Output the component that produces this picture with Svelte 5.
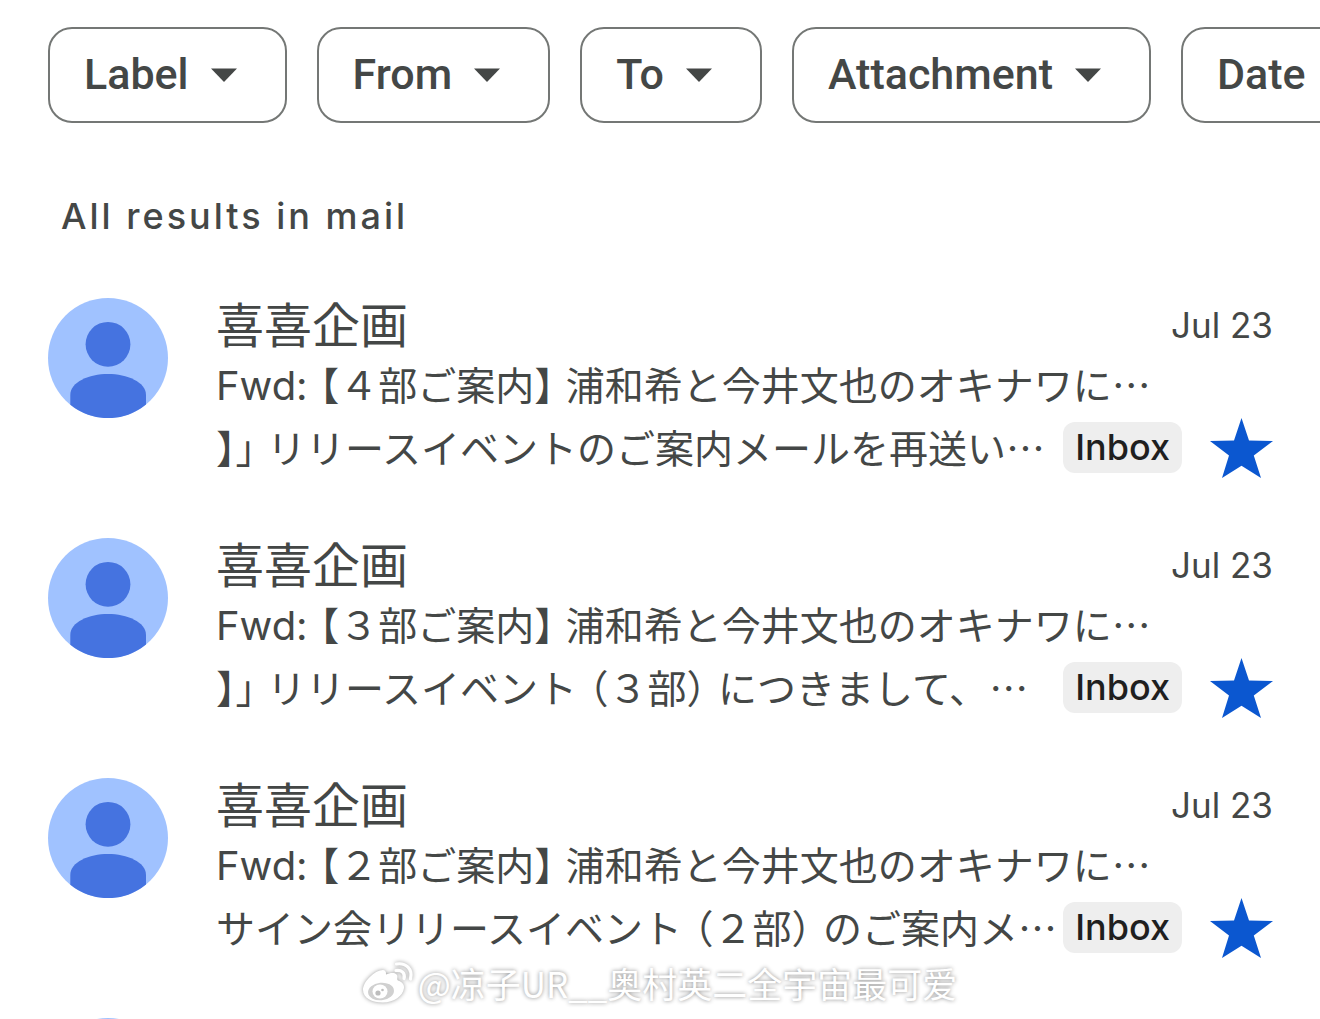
<script>
  const filters = ['Label', 'From', 'To', 'Attachment', 'Date'];

  const mails = [
    {
      sender: '喜喜企画',
      date: 'Jul 23',
      subject: 'Fwd:【４部ご案内】浦和希と今井文也のオキナワに…',
      snippet: '】」リリースイベントのご案内メールを再送い…',
      starred: true
    },
    {
      sender: '喜喜企画',
      date: 'Jul 23',
      subject: 'Fwd:【３部ご案内】浦和希と今井文也のオキナワに…',
      snippet: '】」リリースイベント（３部）につきまして、 …',
      starred: true
    },
    {
      sender: '喜喜企画',
      date: 'Jul 23',
      subject: 'Fwd:【２部ご案内】浦和希と今井文也のオキナワに…',
      snippet: 'サイン会リリースイベント（２部）のご案内メ…',
      starred: true
    }
  ];

  // Split before opening and after closing brackets, where the half-width
  // punctuation needs some air.
  const runs = (text) => text.split(/(?=[【（])|(?<=[】」）、])(?![】」）])/);
</script>

{#snippet avatar()}
  <svg class="avatar" viewBox="0 0 120 120" aria-hidden="true">
    <circle cx="60" cy="60" r="60" fill="#a0c2ff" />
    <circle cx="60" cy="46.3" r="22.4" fill="#4573e0" />
    <path d="M22.3 106.8V97C22.3 84 41 76 60 76S98 84 98 97v9.6A60 60 0 0 1 22.3 106.8Z" fill="#4573e0" />
  </svg>
{/snippet}

{#snippet spaced(text)}
  {#each runs(text) as run}<span class="run" class:latin={/^[A-Z]/.test(run)}>{run}</span>{/each}
{/snippet}

<main>
  <nav class="filters" aria-label="Search filters">
    {#each filters as filter}
      <button type="button" class="chip" aria-haspopup="listbox">
        {filter}
        <svg class="caret" viewBox="0 0 26 16" aria-hidden="true"><path d="M0 2.500h26L13 16Z" fill="currentColor" /></svg>
      </button>
    {/each}
  </nav>

  <h2>All results in mail</h2>

  <ul class="mails">
    {#each mails as mail}
      <li class="mail">
        {@render avatar()}
        <div class="body">
          <div class="line head">
            <span class="sender">{mail.sender}</span>
            <time>{mail.date}</time>
          </div>
          <div class="line"><span class="text">{@render spaced(mail.subject)}</span></div>
          <div class="line">
            <span class="text">{@render spaced(mail.snippet)}</span>
            <span class="tag">Inbox</span>
            <button type="button" class="star" aria-label="Starred" aria-pressed={mail.starred}>
              <svg viewBox="0 0 63 60" aria-hidden="true">
                <path d="M31.5 0 39 22.5 63 23 43.8 37.5 51 60 31.5 47.8 12 60 19 37.5 0 23 24 22.5Z" fill="#0b57d0" />
              </svg>
            </button>
          </div>
        </div>
      </li>
    {/each}
    <li class="mail">{@render avatar()}</li>
  </ul>

  <div class="watermark">
    <svg viewBox="0 0 52 44" aria-hidden="true">
      <path
        d="M17 9.500c4-1.500 6.500 0 6 4 4-2 9.500-2.500 11 .5 1 2-.5 4.500 1 5.500 4 1.500 6.500 4 6 7.500-1 8-10 14.500-21 14.500C9 41.500 0 37 0 29 0 21 10 11.500 17 9.500Z"
        fill="#fff"
      />
      <ellipse cx="18" cy="30.500" rx="13" ry="8.800" fill="#d0d0d0" transform="rotate(-6 18 30.500)" />
      <ellipse cx="17" cy="30.500" rx="7.500" ry="7" fill="#fff" />
      <circle cx="15" cy="32" r="2.600" fill="#bdbdbd" />
      <circle cx="19.500" cy="29" r="1.300" fill="#bdbdbd" />
      <path d="M33.500 3C43 1.500 50 8 47.500 18M33 9.500c5.500-.8 9.500 2.500 8 8" fill="none" stroke="#fff" stroke-width="3.200" stroke-linecap="round" />
    </svg>
    <span>@凉子UR__奥村英二全宇宙最可爱</span>
  </div>
</main>

<style>
  :global(body) {
    margin: 0;
    background: #fff;
  }

  main {
    position: relative;
    box-sizing: border-box;
    height: 100vh;
    overflow: hidden;
    padding-top: 27px;
    color: #444746;
    font-family: Inter, 'Noto Sans CJK JP', sans-serif;
  }

  button {
    color: inherit;
    font: inherit;
    cursor: pointer;
  }

  .filters {
    display: flex;
    gap: 30px;
    padding-left: 48px;
    overflow: hidden;
  }

  .chip {
    display: flex;
    flex: none;
    align-items: center;
    gap: 22px;
    box-sizing: border-box;
    height: 96px;
    padding: 0 48px 2px 34px;
    border: 2px solid #747775;
    border-radius: 24px;
    background: #fff;
    font-family: Roboto, sans-serif;
    font-size: 43px;
    font-weight: 500;
  }

  .caret {
    width: 26px;
    height: 16px;
  }

  h2 {
    margin: 68px 0 0;
    padding-left: 61px;
    font-size: 36px;
    font-weight: 500;
    line-height: 50px;
    letter-spacing: 3px;
  }

  .mails {
    display: flex;
    flex-direction: column;
    gap: 60px;
    margin: 0;
    padding: 57px 47px 0 48px;
    list-style: none;
  }

  .mail {
    display: flex;
    gap: 48px;
    height: 180px;
  }

  .avatar {
    flex: none;
    width: 120px;
    height: 120px;
  }

  .body {
    flex: 1;
    min-width: 0;
  }

  .line {
    display: flex;
    align-items: center;
    height: 61px;
    white-space: nowrap;
  }

  .head {
    justify-content: space-between;
    height: 58px;
  }

  .sender {
    padding-bottom: 10px;
    font-family: 'Noto Sans CJK JP', sans-serif;
    font-size: 48px;
    line-height: 56px;
  }

  time {
    padding-bottom: 4px;
    font-size: 35px;
  }

  .text {
    display: flex;
    flex: 1;
    align-items: baseline;
    gap: 12px;
    min-width: 0;
    padding-bottom: 4px;
    overflow: hidden;
    font-family: 'Noto Sans CJK JP', sans-serif;
    font-size: 39px;
    font-feature-settings: 'halt';
    line-height: 58px;
  }

  .run {
    white-space: pre;
  }

  .latin {
    font-family: Inter, sans-serif;
    font-size: 40px;
  }

  .tag {
    margin-right: 28px;
    padding: 0 12px;
    border-radius: 12px;
    background: #eee;
    color: #1f1f1f;
    font-size: 36px;
    font-weight: 500;
    line-height: 51px;
  }

  .star {
    flex: none;
    padding: 0;
    border: 0;
    background: none;
  }

  .star svg {
    display: block;
    width: 63px;
    height: 60px;
  }

  .watermark {
    position: absolute;
    right: 0;
    bottom: 11px;
    left: 0;
    display: flex;
    align-items: center;
    justify-content: center;
    gap: 3px;
    color: #fff;
    font-family: 'Noto Sans CJK SC', sans-serif;
    font-size: 35px;
    line-height: 50px;
    text-shadow: 0 0 4px #888;
    pointer-events: none;
  }

  .watermark svg {
    width: 52px;
    height: 44px;
    filter: drop-shadow(0 0 2px #999);
  }
</style>
